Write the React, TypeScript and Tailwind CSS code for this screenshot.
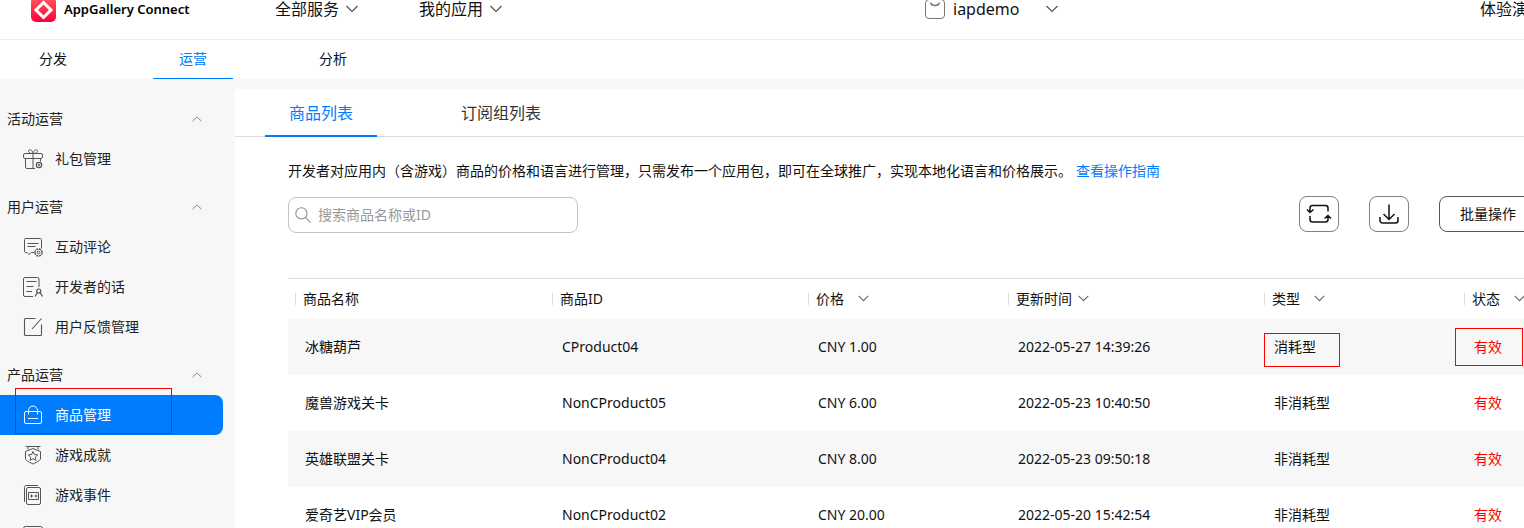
import { useState } from 'react'
import type { ReactNode } from 'react'
import clsx from 'clsx'

interface IconProps {
  className?: string
}

function Svg({ className = 'w-5 h-5', children }: IconProps & { children: ReactNode }) {
  return (
    <svg viewBox="0 0 20 20" fill="none" stroke="currentColor" aria-hidden="true" className={clsx('shrink-0', className)}>
      {children}
    </svg>
  )
}

function Chevron({ up = false, className }: IconProps & { up?: boolean }) {
  return (
    <svg viewBox="0 0 12 8" fill="none" stroke="currentColor" strokeWidth="1.200" aria-hidden="true" className={clsx('shrink-0', className)}>
      <path d={up ? 'M0.5 6 6 1l5.5 5' : 'M0.5 1 6 6.500l5.500-5.500'} />
    </svg>
  )
}

const GiftIcon = () => (
  <Svg>
    <rect x="0.5" y="4.5" width="19" height="5" rx="1.5" />
    <path d="M2.5 9.5v8.500a1.500 1.500 0 0 0 1.500 1.500h8M17.500 9.500v3M10 4.500v15M10 4.500C7 4.500 5 3.500 5.500 1.800 6 .2 9.500.5 10 4.500ZM10 4.500c3 0 5-1 4.500-2.700C14 .2 10.500.5 10 4.500Z" />
    <circle cx="16" cy="16" r="2.700" strokeWidth="1.200" />
    <circle cx="16" cy="16" r="0.800" />
  </Svg>
)

const CommentIcon = () => (
  <Svg>
    <path d="M11.500 15.500H8.500L6 17.500l-2-2H2.500a1 1 0 0 1-1-1v-12a1 1 0 0 1 1-1h15a1 1 0 0 1 1 1v9M4.500 6.500h11M4.500 9.500h8" />
    <circle cx="15.500" cy="15.500" r="3.500" strokeDasharray="2 .75" strokeWidth="1.500" />
    <circle cx="15.500" cy="15.500" r="1.300" />
  </Svg>
)

const DeveloperIcon = () => (
  <Svg>
    <path d="M10 19.500H2A1.500 1.500 0 0 1 .5 18V2A1.500 1.500 0 0 1 2 .5h12.500A1.500 1.500 0 0 1 16 2v8M3.500 4.500h10M3.500 9.500h7M3.500 14.500h5.500" />
    <circle cx="15.700" cy="14" r="2" strokeWidth="1.200" />
    <path d="m12 19.500 2.500-4M19.500 19.500l-2.500-4" strokeWidth="1.300" />
  </Svg>
)

const FeedbackIcon = () => (
  <Svg>
    <path d="M12.500 1.500h-10a1 1 0 0 0-1 1v15a1 1 0 0 0 1 1h15a1 1 0 0 0 1-1v-10M9 12l9.500-10.500" strokeWidth="1.100" />
  </Svg>
)

const BagIcon = () => (
  <Svg>
    <rect x="1.500" y="6.500" width="17" height="12" rx="1.500" />
    <path d="M5.500 9.500V5.500a4.500 4.500 0 0 1 9 0v4M5 13.500h10" />
  </Svg>
)

const MedalIcon = () => (
  <Svg>
    <path d="M2.500 1.500h15M5 1.500v3M15 1.500v3M10 3.500l7.500 3v7.500c0 1-3 3-7.500 5-4.500-2-7.500-4-7.500-5V6.500Z" />
    <path d="m10 6.500 1.400 3 3.300.4-2.400 2.200.6 3.200-2.900-1.600-2.900 1.600.6-3.200-2.400-2.200 3.300-.4Z" />
  </Svg>
)

const EventIcon = () => (
  <Svg>
    <path d="M1.500 17V2.500A1.500 1.500 0 0 1 3 .5h12" />
    <rect x="3.500" y="2.500" width="14" height="17" rx="1.500" />
    <path d="M5.500 7.500h10v7h-10ZM7 11h3M8.500 9.500v3" />
    <circle cx="13" cy="11" r="1" />
  </Svg>
)

const CardIcon = () => (
  <Svg>
    <rect x="0.500" y="1.500" width="19" height="17" rx="2" />
  </Svg>
)

interface MenuItem {
  label: string
  icon: ReactNode
  marked?: boolean
}

const menu: { title: string; items: MenuItem[] }[] = [
  { title: '活动运营', items: [{ label: '礼包管理', icon: <GiftIcon /> }] },
  {
    title: '用户运营',
    items: [
      { label: '互动评论', icon: <CommentIcon /> },
      { label: '开发者的话', icon: <DeveloperIcon /> },
      { label: '用户反馈管理', icon: <FeedbackIcon /> },
    ],
  },
  {
    title: '产品运营',
    items: [
      { label: '商品管理', icon: <BagIcon />, marked: true },
      { label: '游戏成就', icon: <MedalIcon /> },
      { label: '游戏事件', icon: <EventIcon /> },
      { label: '', icon: <CardIcon /> },
    ],
  },
]

const columns = [
  { title: '商品名称', width: 'w-[257px]' },
  { title: '商品ID', width: 'w-[256px]' },
  { title: '价格', width: 'w-[200px]', sort: 'ml-[14px]' },
  { title: '更新时间', width: 'w-[256px]', sort: 'ml-[6px]' },
  { title: '类型', width: 'w-[200px]', sort: 'ml-[14px]' },
  { title: '状态', width: 'w-auto', sort: 'ml-[14px]' },
]

const products = [
  { name: '冰糖葫芦', id: 'CProduct04', price: 'CNY 1.00', updated: '2022-05-27 14:39:26', type: '消耗型', status: '有效', marked: true },
  { name: '魔兽游戏关卡', id: 'NonCProduct05', price: 'CNY 6.00', updated: '2022-05-23 10:40:50', type: '非消耗型', status: '有效' },
  { name: '英雄联盟关卡', id: 'NonCProduct04', price: 'CNY 8.00', updated: '2022-05-23 09:50:18', type: '非消耗型', status: '有效' },
  { name: '爱奇艺VIP会员', id: 'NonCProduct02', price: 'CNY 20.00', updated: '2022-05-20 15:42:54', type: '非消耗型', status: '有效' },
]

function Header() {
  return (
    <header className="flex h-10 shrink-0 flex-col justify-end overflow-hidden border-b border-[#eeeeee] bg-white">
      <div className="flex h-[60px] shrink-0 items-center whitespace-nowrap text-base/4">
        <a href="#" className="flex w-[275px] shrink-0 items-center gap-2 pl-[31px]">
          <svg viewBox="0 0 25 25" aria-hidden="true" className="h-[25px] w-[25px] shrink-0">
            <defs>
              <linearGradient id="logo" x1="0" y1="0" x2="0" y2="1">
                <stop offset="0" stopColor="#ff5a5f" />
                <stop offset="1" stopColor="#ff0037" />
              </linearGradient>
            </defs>
            <rect width="25" height="25" rx="5" fill="url(#logo)" />
            <path d="m12.500 5.500 7.500 7.500-7.500 7.500L5 13Z" fill="none" stroke="#fff" strokeWidth="3" />
          </svg>
          <span className="text-[13px] font-semibold text-black">AppGallery Connect</span>
        </a>
        <button type="button" className="flex w-36 items-center gap-[7px]">
          全部服务
          <Chevron className="h-2 w-3 text-[#555555]" />
        </button>
        <button type="button" className="flex items-center gap-[7px]">
          我的应用
          <Chevron className="h-2 w-3 text-[#555555]" />
        </button>
        <button type="button" className="ml-auto mr-[422px] flex items-center">
          <Svg className="mr-2 h-5 w-5 text-[#777777]">
            <rect x="0.500" y="0.500" width="19" height="19" rx="3.500" />
            <path d="M5.500 3.500c1 4 8 4 9 0" strokeWidth="1.500" />
          </Svg>
          <span className="w-[93px] text-left">iapdemo</span>
          <Chevron className="h-2 w-3 text-[#555555]" />
        </button>
        <a href="#" className="w-11 shrink-0">体验演示</a>
      </div>
    </header>
  )
}

function SectionNav() {
  const [active, setActive] = useState('运营')

  return (
    <nav className="flex h-[39px] shrink-0 gap-[60px] bg-white pl-[13px]">
      {['分发', '运营', '分析'].map((label) => (
        <button
          key={label}
          type="button"
          onClick={() => setActive(label)}
          className={clsx('w-20 border-b', label === active ? 'border-[#007dff] text-[#007dff]' : 'border-transparent')}
        >
          {label}
        </button>
      ))}
    </nav>
  )
}

function Sidebar() {
  const [active, setActive] = useState('商品管理')

  return (
    <aside className="w-[235px] shrink-0 overflow-hidden pt-3 text-[#222222]">
      {menu.map((group) => (
        <section key={group.title} className="mt-2">
          <button type="button" className="flex h-10 w-full items-center justify-between pl-[7px] pr-[33px]">
            {group.title}
            <Chevron up className="h-[7px] w-[10px] text-[#888888]" />
          </button>
          <ul>
            {group.items.map((item, i) => (
              <li key={i} className="relative">
                <button
                  type="button"
                  onClick={() => setActive(item.label)}
                  className={clsx(
                    'flex h-10 w-[223px] items-center gap-3 rounded-r-lg pl-[23px]',
                    item.label === active && 'bg-[#007dff] text-white'
                  )}
                >
                  <span className={item.label === active ? 'text-white' : 'text-[#555555]'}>{item.icon}</span>
                  {item.label}
                </button>
                {item.marked && (
                  <span className="pointer-events-none absolute -top-[7px] left-[15px] h-[46px] w-[157px] border border-[#ff0000]" />
                )}
              </li>
            ))}
          </ul>
        </section>
      ))}
    </aside>
  )
}

function Toolbar() {
  return (
    <div className="mt-[15px] flex h-[37px] items-start">
      <label className="flex h-9 w-[290px] items-center gap-[7px] self-end rounded-lg border border-[#c4c4c4] px-[6px]">
        <Svg className="h-4 w-4 text-[#8c8c8c]">
          <circle cx="8" cy="8" r="7" strokeWidth="1.300" />
          <path d="m13 13 6.500 6.500" strokeWidth="1.300" />
        </Svg>
        <input
          type="text"
          aria-label="搜索商品名称或ID"
          placeholder="搜索商品名称或ID"
          className="min-w-0 flex-1 outline-none placeholder:text-[#999999]"
        />
      </label>
      <div className="-mr-5 ml-auto flex shrink-0 gap-[30px]">
        <button type="button" aria-label="刷新" className="flex h-9 w-10 items-center justify-center rounded-lg border border-[#808080]">
          <svg viewBox="0 0 26 20" fill="none" stroke="#111" strokeWidth="1.500" aria-hidden="true" className="h-5 w-[26px]">
            <path d="M4 8V4a2.500 2.500 0 0 1 2.500-2.500h13A2.500 2.500 0 0 1 22 4v3.500M1 5.500l3 3 3.500-3M22 11.500v4a2.500 2.500 0 0 1-2.500 2.500h-13A2.500 2.500 0 0 1 4 15.500V12M18.500 14.500l3.500-3 3 3" />
          </svg>
        </button>
        <button type="button" aria-label="下载" className="flex h-9 w-10 items-center justify-center rounded-lg border border-[#808080]">
          <Svg>
            <path d="M10 .5v14.500M4.500 10l5.500 5.500 5.500-5.500M1 13v3.500A2.500 2.500 0 0 0 3.500 19h13a2.500 2.500 0 0 0 2.500-2.500V13" strokeWidth="1.500" />
          </Svg>
        </button>
        <button type="button" className="h-9 w-[105px] rounded-lg border border-[#555555] pl-5 text-left">批量操作</button>
      </div>
    </div>
  )
}

function ProductTable() {
  return (
    <table className="mt-[45px] w-full table-fixed border-collapse whitespace-nowrap text-left">
      <thead>
        <tr className="h-10 border-t border-[#dddddd]">
          {columns.map((col) => (
            <th key={col.title} className={clsx('p-0 pl-[7px] font-normal', col.width)}>
              <div className="flex items-center">
                <span className="mr-[7px] h-3 w-px shrink-0 bg-[#dddddd]" />
                {col.title}
                {col.sort && <Chevron className={clsx('h-[7px] w-[11px] text-[#666666]', col.sort)} />}
              </div>
            </th>
          ))}
        </tr>
      </thead>
      <tbody>
        {products.map((p) => (
          <tr key={p.id} className="h-14 odd:bg-[#f7f7f7]">
            <td className="p-0 pl-[17px]">{p.name}</td>
            <td className="p-0 pl-[17px]">{p.id}</td>
            <td className="p-0 pl-[17px]">{p.price}</td>
            <td className="p-0 pl-[17px]">{p.updated}</td>
            <td className="relative p-0 pl-[17px]">
              {p.type}
              {p.marked && (
                <span className="pointer-events-none absolute left-[7px] top-[14px] h-[34px] w-[76px] border border-[#ff0000]" />
              )}
            </td>
            <td className="relative p-0 pl-[17px] text-[#ff0000]">
              {p.status}
              {p.marked && (
                <span className="pointer-events-none absolute -left-[2px] top-[9px] h-[38px] w-[68px] border border-[#ff0000]" />
              )}
            </td>
          </tr>
        ))}
      </tbody>
    </table>
  )
}

export default function App() {
  const [tab, setTab] = useState('商品列表')

  return (
    <div className="flex h-screen flex-col overflow-hidden bg-[#f7f7f7] font-['Noto_Sans','Noto_Sans_CJK_SC',sans-serif] text-sm text-[#111111]">
      <Header />
      <SectionNav />
      <div className="flex min-h-0 flex-1">
        <Sidebar />
        <main className="mt-[10px] min-w-0 flex-1 overflow-hidden bg-white">
          <div className="flex h-12 gap-[60px] border-b border-[#dddddd] pl-[30px] text-base">
            {['商品列表', '订阅组列表'].map((label) => (
              <button
                key={label}
                type="button"
                onClick={() => setTab(label)}
                className={clsx(
                  '-mb-px border-b-2 px-6 pt-[2px]',
                  label === tab ? 'border-[#007dff] text-[#007dff]' : 'border-transparent text-[#333333]'
                )}
              >
                {label}
              </button>
            ))}
          </div>
          <div className="pl-[53px] pt-6">
            <p className="whitespace-nowrap">
              开发者对应用内（含游戏）商品的价格和语言进行管理，只需发布一个应用包，即可在全球推广，实现本地化语言和价格展示。
              <a href="#" className="ml-1 text-[#007dff]">查看操作指南</a>
            </p>
            <Toolbar />
            <ProductTable />
          </div>
        </main>
      </div>
    </div>
  )
}
